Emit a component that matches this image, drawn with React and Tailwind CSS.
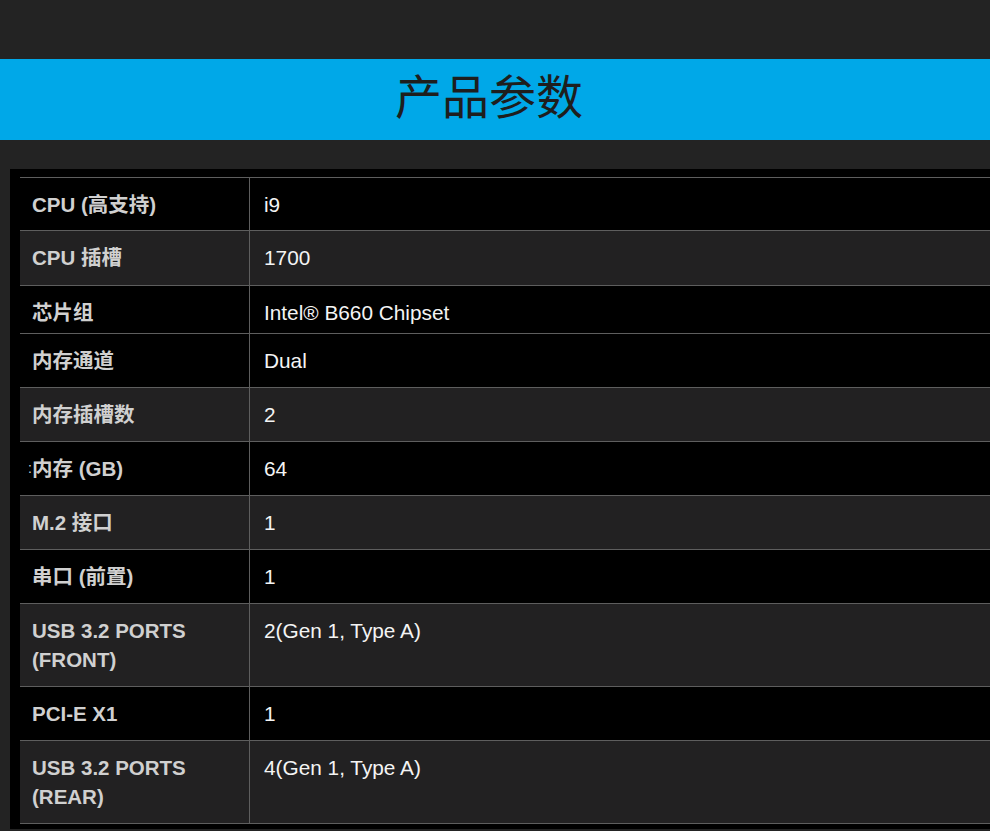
import React from "react";

const G = "bg-[#222122]";
const B = "bg-black";
const rows = [
  { k: "CPU (高支持)", v: "i9", h: "h-[53px]", bg: B },
  { k: "CPU 插槽", v: "1700", h: "h-[55px]", bg: G },
  { k: "芯片组", v: "Intel® B660 Chipset", h: "h-[48px]", bg: B },
  { k: "内存通道", v: "Dual", h: "h-[54px]", bg: B },
  { k: "内存插槽数", v: "2", h: "h-[54px]", bg: G },
  { k: "内存 (GB)", v: "64", h: "h-[54px]", bg: B, mark: true },
  { k: "M.2 接口", v: "1", h: "h-[54px]", bg: G },
  { k: "串口 (前置)", v: "1", h: "h-[54px]", bg: B },
  { k: "", v: "2(Gen 1, Type A)", h: "h-[83px]", bg: G, two: ["USB 3.2 PORTS", "(FRONT)"] },
  { k: "PCI-E X1", v: "1", h: "h-[54px]", bg: B },
  { k: "", v: "4(Gen 1, Type A)", h: "h-[83px]", bg: G, two: ["USB 3.2 PORTS", "(REAR)"] },
];

export default function App() {
  const font = { fontFamily: '"Liberation Sans", Arial, "Noto Sans CJK SC", sans-serif' };
  return (
    <div className="w-[990px] h-[831px] overflow-hidden bg-[#232323]" style={font}>
      <div className="h-[59px]" />
      <div className="h-[81px] bg-[#00a8e8] flex items-center justify-center">
        <h1
          className="text-[47px] leading-none font-normal text-[#1e1e1e] pb-[12px] pr-[12px]"
          style={{ fontFamily: '"Noto Sans CJK SC", "Noto Sans", sans-serif' }}
        >
          产品参数
        </h1>
      </div>
      <div className="h-[29px]" />
      <div className="ml-[10px] h-[660px] bg-black pt-[8px] pl-[10px] overflow-hidden">
        <div className="w-[1000px] border-b border-[#5e5e5e]">
          {rows.map((r, i) => (
            <div key={i} className={`flex border-t border-[#5e5e5e] ${r.h} ${r.bg} box-border`}>
              <div className="relative w-[230px] shrink-0 box-border pl-[12px] pt-[12px] text-[20.5px] leading-[29px] font-bold text-[#d0d0d0] border-r border-[#5e5e5e]">
                {r.mark && (
                  <span className="absolute left-[8px] top-[12px] text-[14px] font-normal text-[#d0d0d0]">:</span>
                )}
                {r.two ? (
                  <>
                    <div>{r.two[0]}</div>
                    <div>{r.two[1]}</div>
                  </>
                ) : (
                  r.k
                )}
              </div>
              <div className="flex-1 pl-[14px] pt-[12px] text-[20.8px] leading-[29px] text-[#f4f4f4]">
                {r.v}
              </div>
            </div>
          ))}
        </div>
      </div>
    </div>
  );
}
